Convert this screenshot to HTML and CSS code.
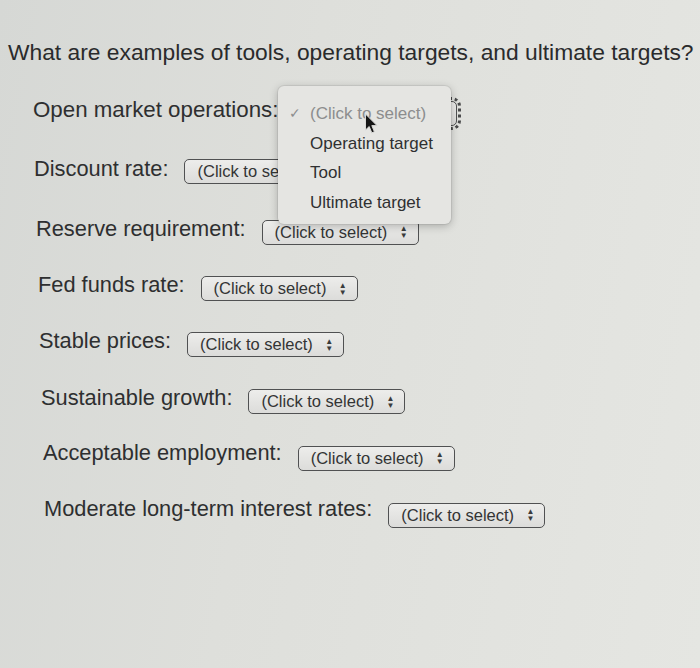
FILE: index.html
```html
<!DOCTYPE html>
<html>
<head>
<meta charset="utf-8">
<link rel="stylesheet" href="styles.css">
</head>
<body>
<div class="page">
  <h1 class="question">What are examples of tools, operating targets, and ultimate targets?</h1>
  <div class="rows">
    <div class="row r1"><span class="label">Open market operations:</span><span class="select focus"><span class="stext">(Click to select)</span><span class="arrows">&#9650;<br>&#9660;</span></span></div>
    <div class="row r2"><span class="label">Discount rate:</span><span class="select"><span class="stext">(Click to select)</span><span class="arrows">&#9650;<br>&#9660;</span></span></div>
    <div class="row r3"><span class="label">Reserve requirement:</span><span class="select"><span class="stext">(Click to select)</span><span class="arrows">&#9650;<br>&#9660;</span></span></div>
    <div class="row r4"><span class="label">Fed funds rate:</span><span class="select"><span class="stext">(Click to select)</span><span class="arrows">&#9650;<br>&#9660;</span></span></div>
    <div class="row r5"><span class="label">Stable prices:</span><span class="select"><span class="stext">(Click to select)</span><span class="arrows">&#9650;<br>&#9660;</span></span></div>
    <div class="row r6"><span class="label">Sustainable growth:</span><span class="select"><span class="stext">(Click to select)</span><span class="arrows">&#9650;<br>&#9660;</span></span></div>
    <div class="row r7"><span class="label">Acceptable employment:</span><span class="select"><span class="stext">(Click to select)</span><span class="arrows">&#9650;<br>&#9660;</span></span></div>
    <div class="row r8"><span class="label">Moderate long-term interest rates:</span><span class="select"><span class="stext">(Click to select)</span><span class="arrows">&#9650;<br>&#9660;</span></span></div>
  </div>
  <div class="menu">
    <div class="opt current"><span class="check">&#10003;</span>(Click to select)</div>
    <div class="opt">Operating target</div>
    <div class="opt">Tool</div>
    <div class="opt">Ultimate target</div>
  </div>
  <svg class="cursor" width="15" height="22" viewBox="0 0 15 22"><path d="M1.5 1 L1.5 17 L5.2 13.5 L7.8 19.8 L10.4 18.8 L7.8 12.6 L13 12.6 Z" fill="#151515" stroke="#d8d8d6" stroke-width="1" stroke-linejoin="round"/></svg>
</div>
</body>
</html>
```
FILE: styles.css
```css
html, body {
  margin: 0;
  padding: 0;
}
body {
  width: 700px;
  height: 668px;
  overflow: hidden;
  background: linear-gradient(100deg, #d6d8d5 0%, #dedfdb 40%, #e5e6e2 100%);
  font-family: "Liberation Sans", Arial, sans-serif;
  color: #2e2f30;
}
.page {
  position: relative;
  height: 668px;
  padding: 37px 0 0 8px;
  box-sizing: border-box;
}
.question {
  margin: 0;
  font-size: 22.8px;
  font-weight: normal;
  line-height: 30px;
  color: #2a2b2c;
}
.rows {
  display: flex;
  flex-direction: column;
  margin-top: 31px;
}
.row {
  display: flex;
  align-items: center;
  height: 24px;
  font-size: 21.8px;
}
.label {
  white-space: nowrap;
  margin-right: 16px;
}
.r1 { padding-left: 25px; font-size: 22.3px; }
.r2 { padding-left: 26px; margin-top: 35px; }
.r3 { padding-left: 28px; margin-top: 36px; }
.r4 { padding-left: 30px; margin-top: 32px; }
.r5 { padding-left: 31px; margin-top: 32px; }
.r6 { padding-left: 33px; margin-top: 33px; }
.r7 { padding-left: 35px; margin-top: 31px; }
.r8 { padding-left: 36px; margin-top: 32px; }
.r1 .select { top: 3px; margin-left: 6px; }
.r2 .select { top: 2px; }
.r3 .select { top: 3px; }
.r4 .select, .r5 .select, .r6 .select { top: 3.5px; }
.r7 .select { top: 5px; }
.r8 .select { top: 6px; }
.select {
  position: relative;
  display: inline-flex;
  align-items: center;
  justify-content: space-between;
  box-sizing: border-box;
  width: 157px;
  height: 25px;
  padding: 0 10px 0 12px;
  border: 1.5px solid #505152;
  border-radius: 5px;
  background: linear-gradient(#ededeb, #dcdcda);
  font-size: 16.5px;
  color: #333435;
}
.arrows {
  font-size: 8px;
  line-height: 7px;
  text-align: center;
  color: #3a3b3c;
}
.focus {
  outline: 3px dotted #4a4b4c;
  outline-offset: 1px;
}
.menu {
  position: absolute;
  left: 278px;
  top: 86px;
  width: 173px;
  height: 138px;
  padding-top: 13px;
  box-sizing: border-box;
  background: #e5e5e2;
  border-radius: 6px;
  box-shadow: 0 2px 8px rgba(0,0,0,0.25), 0 0 0 1px rgba(0,0,0,0.06);
  font-size: 17px;
  color: #2f3031;
}
.opt {
  height: 29.5px;
  line-height: 29.5px;
  padding-left: 32px;
  position: relative;
  white-space: nowrap;
}
.current { color: #8c8d8e; }
.check {
  position: absolute;
  left: 11px;
  font-size: 14px;
}
.cursor {
  position: absolute;
  left: 364px;
  top: 113px;
}
```
